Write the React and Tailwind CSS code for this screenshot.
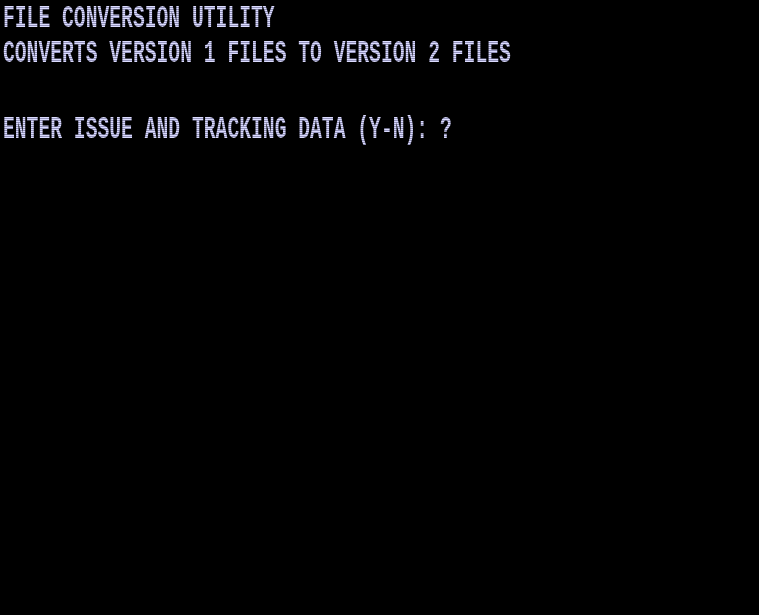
import React from "react";

const lines = [
  "FILE CONVERSION UTILITY",
  "CONVERTS VERSION 1 FILES TO VERSION 2 FILES",
  "",
  "ENTER ISSUE AND TRACKING DATA (Y-N): ?",
];

export default function App() {
  return (
    <div className="w-full h-[615px] bg-black overflow-hidden pl-[3px]">
      {lines.map((l, i) => (
        <div
          key={i}
          className={
            (i === 0 ? "h-[35px]" : "h-[38px]") +
            " flex items-start whitespace-pre"
          }
        >
          <span
            className="inline-block origin-left scale-x-[0.615] text-[32px] leading-[37px] font-bold bg-[repeating-linear-gradient(to_bottom,#dcdcff_0px,#dcdcff_1px,#9494bc_1px,#9494bc_2px)] bg-clip-text text-transparent"
            style={{ fontFamily: '"Liberation Mono", monospace' }}
          >
            {l || " "}
          </span>
        </div>
      ))}
    </div>
  );
}
